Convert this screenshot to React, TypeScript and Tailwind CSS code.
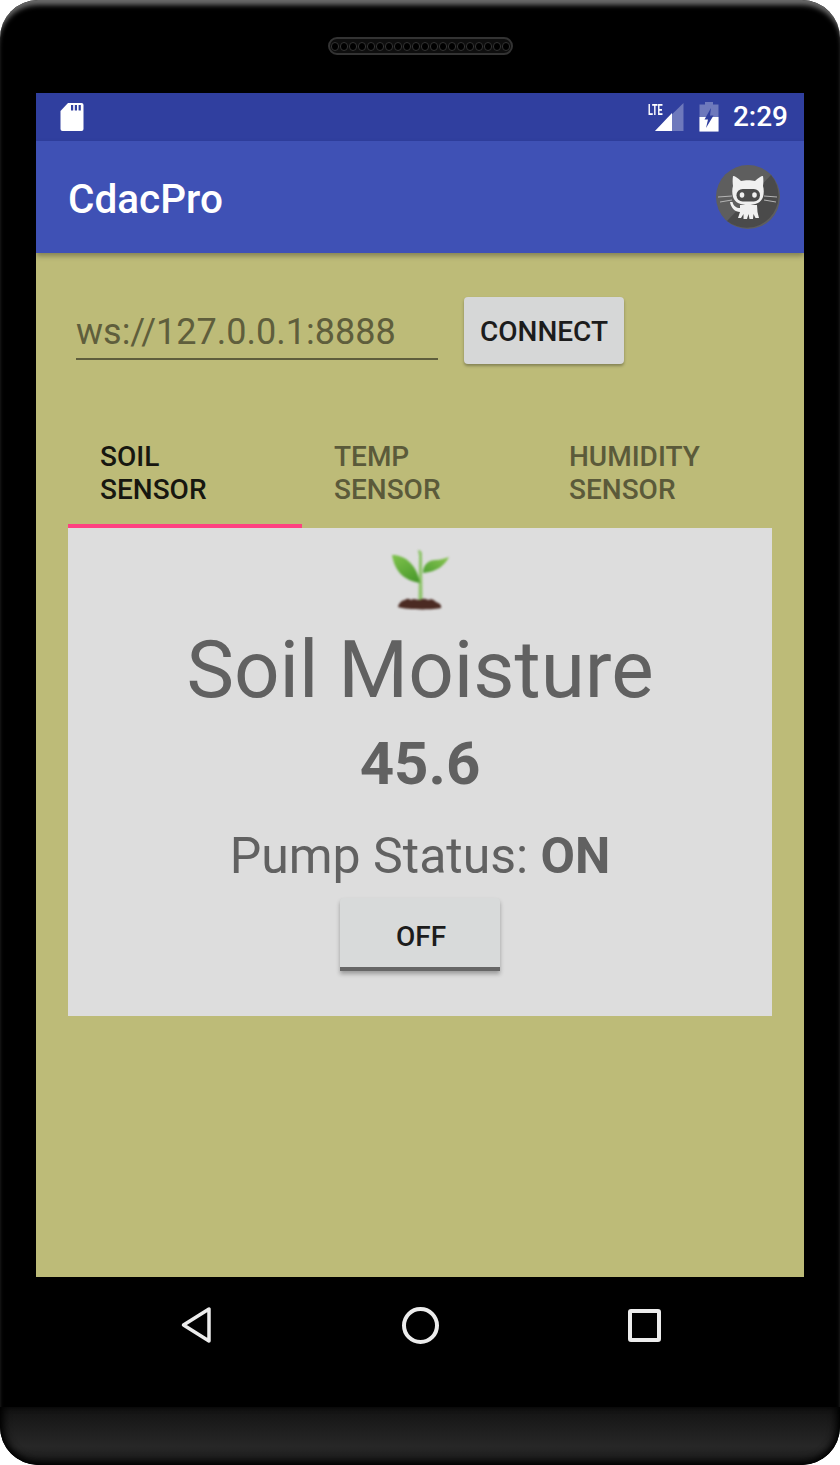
import React from 'react'

function SdIcon() {
  return (
    <svg width="24" height="28" viewBox="0 0 24 28">
      <path d="M8 0H21.500a2 2 0 0 1 2 2V26a2 2 0 0 1-2 2H2.500a2 2 0 0 1-2-2V8Z" fill="#fff" />
      <rect x="11" y="2" width="2.200" height="5.500" fill="#303F9F" />
      <rect x="14.800" y="2" width="2.200" height="5.500" fill="#303F9F" />
      <rect x="18.600" y="2" width="2.200" height="5.500" fill="#303F9F" />
    </svg>
  )
}

function SignalIcon() {
  return (
    <svg width="30" height="30" viewBox="0 0 30 30" className="block">
      <path d="M29.500 1V29H1Z" fill="#fff" fillOpacity="0.3" />
      <path d="M18 11V29H1Z" fill="#fff" />
    </svg>
  )
}

function BatteryIcon() {
  return (
    <svg width="20" height="30" viewBox="0 0 20 30" className="block">
      <path d="M6 0H14V2.500H19.500V29.500H.5V2.500H6Z" fill="#fff" fillOpacity="0.3" />
      <path d="M.5 15H19.500V29.500H.5Z" fill="#fff" />
      <path d="M12 6 5.500 17.500H9L7 26 14.500 13.500H11Z" fill="#303F9F" />
    </svg>
  )
}

function Octocat() {
  return (
    <svg width="64" height="64" viewBox="0 0 64 64" className="block">
      <circle cx="32" cy="32" r="32" fill="#5e5e5e" />
      <path d="M55 10A32 32 0 0 1 11 56Z" fill="#4a4a4a" />
      <path d="M2 32 16 31M4 37 16 35M48 31 61 32M48 35 60 37" stroke="#b5b5b5" strokeWidth="1" fill="none" />
      <path d="M17 11C19 11 22 13 25 16C29 15 35 15 39 16C42 13 45 11 47 11C47.500 14 47.500 18 47 21C48 24 48 28 47 32C45 38 39 40 32 40C25 40 19 38 17 32C16 28 16 24 17 21C16.500 18 16.500 14 17 11Z" fill="#f0f0f0" />
      <rect x="20.500" y="24" width="23.500" height="12.500" rx="6.200" fill="#4c4c4c" />
      <ellipse cx="26" cy="30" rx="2.300" ry="2.800" fill="#f0f0f0" />
      <ellipse cx="38.500" cy="30" rx="2.300" ry="2.800" fill="#f0f0f0" />
      <path d="M24 40H41L41.500 47 43 53H39.500L37.500 49 37 54H33.500L32.500 49 31 54H27.500L27.500 49 25 53H22L24 47C19 47 15 43 14 37L16.500 37C17.500 41 20.500 43 24 43Z" fill="#f0f0f0" />
    </svg>
  )
}

function Sprout() {
  return (
    <svg width="60" height="60" viewBox="0 0 60 60" className="block">
      <defs>
        <linearGradient id="leafLeft" x1="0.2" y1="0" x2="0.7" y2="1">
          <stop offset="0" stopColor="#7cc04a" />
          <stop offset="1" stopColor="#4a9a2c" />
        </linearGradient>
        <linearGradient id="leafRight" x1="1" y1="0" x2="0" y2="1">
          <stop offset="0" stopColor="#8ac552" />
          <stop offset="1" stopColor="#4fa032" />
        </linearGradient>
      </defs>
      <path d="M28 0C30 0 31.500 1 32 3L32.500 50H28.500L29 6Z" fill="#8fc46c" />
      <path d="M2 5C13 5 26 12 30 33C17 31 5 24 2 5Z" fill="url(#leafLeft)" />
      <path d="M33 23C33 14 39 10 46 10C50 10 55 8 59 7C55 15 47 22 33 23Z" fill="url(#leafRight)" />
      <path d="M8 57C9 53 12 50 15 50C17 48 19 49 21 50C24 48 26 50 30 50C33 48 36 49 38 50C42 48 44 50 46 52C49 53 52 55 51 58C44 60 16 60 8 57Z" fill="#4b2a22" />
    </svg>
  )
}

function Speaker() {
  const holes = Array.from({ length: 20 })
  return (
    <div className="flex h-[18px] w-[185px] items-center justify-between rounded-[9px] border-2 border-[#333333] bg-[#0e0e0e] px-[1px]">
      {holes.map((_, i) => (
        <span key={i} className="h-[9px] w-[8px] rounded-full border border-[#333333] bg-black" />
      ))}
    </div>
  )
}

function Tab({ top, bottom, active, first }: { top: string; bottom: string; active?: boolean; first?: boolean }) {
  return (
    <div
      className={`${first ? 'w-[234px]' : 'flex-1'} h-[98px] pl-8 pt-[10px] text-[28px] leading-[33px] font-medium border-b-4 ${
        active ? 'border-[#FF4081] text-[#171710]' : 'border-transparent text-[#5b5a3a]'
      }`}
    >
      <div>{top}</div>
      <div>{bottom}</div>
    </div>
  )
}

export default function App() {
  return (
    <div className="w-[840px] h-[1465px] bg-white overflow-hidden font-['Roboto',sans-serif]">
      <div className="w-full h-full bg-black rounded-[38px] shadow-[inset_0_7px_5px_-2px_#6a6a6a] flex flex-col overflow-hidden">
        <div className="h-[93px] flex justify-center pt-[37px] shrink-0">
          <Speaker />
        </div>

        <div className="mx-9 h-[1184px] shrink-0 bg-[#BDBB78] flex flex-col">
          <div className="h-12 bg-[#303F9F] flex items-center justify-between pl-[24px] pr-[16px]">
            <SdIcon />
            <div className="flex items-center">
              <div className="relative mr-[15px]">
                <SignalIcon />
                <span className="absolute -left-[6px] top-0 text-[14px] leading-[16px] font-bold text-white scale-x-[0.65] origin-left">LTE</span>
              </div>
              <BatteryIcon />
              <span className="ml-[14px] text-[28px] font-medium leading-none text-white">2:29</span>
            </div>
          </div>

          <div className="h-28 bg-[#3F51B5] flex items-center justify-between pl-8 pr-6 shadow-[0_3px_5px_rgba(0,0,0,0.3)] z-10">
            <span className="text-[40.5px] font-medium text-white pt-[5px]">CdacPro</span>
            <Octocat />
          </div>

          <div className="px-8 flex-1 flex flex-col">
            <div className="flex items-start pt-11 pl-2">
              <div className="w-[362px] h-[63px] border-b-2 border-[#5f5e3c] text-[36px] leading-[71px] text-[#5f5e3c]">
                ws://127.0.0.1:8888
              </div>
              <button className="ml-[26px] w-40 h-[67px] pt-[2px] bg-[#D6D7D7] rounded text-[28px] font-medium text-[#1c1c1c] shadow-[0_2px_3px_rgba(0,0,0,0.3)]">
                CONNECT
              </button>
            </div>

            <div className="flex mt-[66px]">
              <Tab top="SOIL" bottom="SENSOR" active first />
              <Tab top="TEMP" bottom="SENSOR" />
              <Tab top="HUMIDITY" bottom="SENSOR" />
            </div>

            <div className="h-[488px] bg-[#DDDDDD] flex flex-col items-center text-[#616161]">
              <div className="mt-[22px] blur-[0.8px]">
                <Sprout />
              </div>
              <div className="text-[80px] leading-[94px] mt-[13px]">Soil Moisture</div>
              <div className="text-[60px] leading-[70px] font-bold mt-[12px]">45.6</div>
              <div className="text-[50px] leading-[58px] mt-[28px]">
                Pump Status: <span className="font-bold">ON</span>
              </div>
              <button className="mt-[13px] w-40 h-[73px] pt-[8px] pl-[2px] bg-[#D8DADA] rounded-t border-b-4 border-[#666666] text-[28px] font-medium text-[#1c1c1c] shadow-[0_3px_4px_rgba(0,0,0,0.3)]">
                OFF
              </button>
            </div>
          </div>
        </div>

        <div className="h-[130px] shrink-0 flex items-center pb-[34px] pl-[178px]">
          <svg width="40" height="42" viewBox="0 0 40 42" className="block">
            <path d="M31 5V37L5.500 21Z" fill="none" stroke="#ececec" strokeWidth="3.500" strokeLinejoin="round" />
          </svg>
          <div className="ml-[184px] w-[37px] h-[37px] rounded-full border-[4px] border-[#ececec]" />
          <div className="ml-[189px] w-[33px] h-[33px] rounded-[3px] border-[4px] border-[#ececec]" />
        </div>

        <div className="flex-1 rounded-b-[38px] bg-[linear-gradient(to_bottom,#131313,#272727_68%,#1a1a1a)] shadow-[inset_0_-5px_8px_-2px_#000,inset_6px_0_8px_-3px_#000,inset_-6px_0_8px_-3px_#000]" />
      </div>
    </div>
  )
}
